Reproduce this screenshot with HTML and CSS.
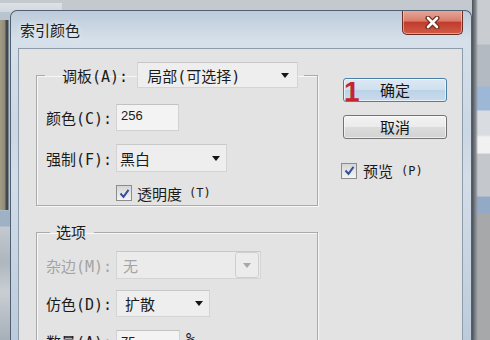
FILE: index.html
```html
<!DOCTYPE html>
<html lang="zh-CN">
<head>
    <meta charset="UTF-8">
    <meta name="viewport" content="width=device-width, initial-scale=1.0">
    <title>索引颜色</title>
    <link rel="stylesheet" href="styles.css">
</head>
<body>
    <div class="desktop">
        <div class="side side-left"></div>

        <!-- 对话框 -->
        <div class="window">
            <div class="titlebar">
                <span class="title">索引颜色</span>
                <button class="close-btn" type="button">
                    <svg width="15" height="13" viewBox="0 0 15 13">
                        <path d="M3 2 L12 11 M12 2 L3 11" stroke="#6b2a22" stroke-width="5" stroke-linecap="round"/>
                        <path d="M3 2 L12 11 M12 2 L3 11" stroke="#ffffff" stroke-width="2.6" stroke-linecap="round"/>
                    </svg>
                </button>
            </div>

            <div class="client">
                <div class="col-main">
                    <!-- 调板 -->
                    <fieldset class="group">
                        <legend class="legend-row">
                            <span>调板(A):</span>
                            <div class="select select-palette"><span>局部(可选择)</span><i class="arrow"></i></div>
                        </legend>
                        <div class="rows rows-palette">
                            <span class="label">颜色(C):</span>
                            <div class="textbox tb-colors">256</div>
                            <span class="label">强制(F):</span>
                            <div class="select select-forced"><span>黑白</span><i class="arrow"></i></div>
                            <span></span>
                            <label class="check">
                                <span class="box"><svg width="13" height="13" viewBox="0 0 13 13"><path d="M2.5 6.5 L5.5 9.8 L10.5 2.8" stroke="#34509a" stroke-width="2" fill="none"/></svg></span>
                                透明度<small>(T)</small>
                            </label>
                        </div>
                    </fieldset>

                    <!-- 选项 -->
                    <fieldset class="group group-options">
                        <legend class="legend-text">选项</legend>
                        <div class="rows rows-options">
                            <span class="label disabled">杂边(M):</span>
                            <div class="select select-matte disabled"><span>无</span><i class="arrow-btn"><i class="arrow"></i></i></div>
                            <span class="label">仿色(D):</span>
                            <div class="select select-dither"><span>扩散</span><i class="arrow"></i></div>
                            <span class="label">数量(A):</span>
                            <div class="amount"><div class="textbox tb-amount">75</div><span>%</span></div>
                        </div>
                    </fieldset>
                </div>

                <div class="col-side">
                    <button class="btn btn-default" type="button"><span class="mark">1</span>确定</button>
                    <button class="btn" type="button">取消</button>
                    <label class="check check-preview">
                        <span class="box"><svg width="13" height="13" viewBox="0 0 13 13"><path d="M2.5 6.5 L5.5 9.8 L10.5 2.8" stroke="#34509a" stroke-width="2" fill="none"/></svg></span>
                        预览<small>(P)</small>
                    </label>
                </div>
            </div>
        </div>

        <div class="side side-right"></div>
    </div>
</body>
</html>
```

FILE: styles.css
```css
body {
    margin: 0;
    width: 490px;
    height: 340px;
    overflow: hidden;
    font-family: "DejaVu Sans Mono", "Noto Sans CJK SC", sans-serif;
    font-size: 15px;
    color: #1b1b1b;
    background:
        linear-gradient(#dde2e7, #cfd6dd) 0 3px / 62px 10px no-repeat,
        #c3c9cf;
}
.desktop {
    display: flex;
    height: 340px;
}
.side {
    flex: none;
}
.side-left {
    width: 10px;
    margin-top: 12px;
    background:
        linear-gradient(to right, #a49c84 0, #8f8a76 5px, #3f4750 6px, #3f4750 8px, #b7c3cf 9px) 0 8px / 10px 190px no-repeat,
        linear-gradient(#b9c4ce 0, #b9c4ce 198px, #9fb1c4 199px, #9fb1c4 214px, #c3c9cf 215px, #aeb6be 250px, #c9ced3 280px, #9ea7b1 340px);
}
.side-right {
    flex: 1;
    background:
        linear-gradient(to right, #4a5058 0, #8b9096 4px, rgba(0, 0, 0, 0) 6px),
        linear-gradient(#c9cdd1 0, #c9cdd1 44px, #b3bac2 45px, #b3bac2 86px, #9db7d6 87px, #9db7d6 110px, #d9dde1 111px, #d9dde1 135px, #f1f1f1 137px, #f1f1f1 153px, #c4c8cc 154px, #c4c8cc 196px, #93aac6 197px, #93aac6 213px, #a6a8aa 214px);
}

/* 窗口框架 */
.window {
    flex: none;
    width: 462px;
    height: 330px;
    margin-top: 10px;
    box-sizing: border-box;
    border: 1px solid #4f6073;
    border-bottom: none;
    border-radius: 7px 7px 0 0;
    padding: 0 8px 0 7px;
    display: flex;
    flex-direction: column;
    overflow: hidden;
    background: linear-gradient(#bccbdb 0, #d6e0ea 30px, #cad7e4 120px, #d3dde8 170px, #bccbdb 330px);
}
.titlebar {
    flex: none;
    height: 37px;
    display: flex;
    justify-content: space-between;
    align-items: flex-start;
}
.title {
    margin: 9px 0 0 2px;
    line-height: 20px;
    font-family: "Noto Sans CJK SC", sans-serif;
    color: #202020;
    text-shadow: 0 0 6px rgba(255, 255, 255, 0.9);
}
.close-btn {
    width: 61px;
    height: 25px;
    margin-top: -1px;
    padding: 0;
    border: 1px solid #6e2c24;
    border-top: none;
    border-radius: 0 0 5px 5px;
    background: linear-gradient(#e8aa9c 0, #d97e6c 45%, #c23b2c 52%, #cf5c47 100%);
    box-shadow: inset 0 0 0 1px rgba(255, 220, 210, 0.5);
    display: flex;
    align-items: center;
    justify-content: center;
}

/* 客户区 */
.client {
    flex: 1;
    min-height: 0;
    display: flex;
    align-items: flex-start;
    padding: 13px 0 0 17px;
    border: 1px solid #8e9bab;
    border-bottom: none;
    background: #e3e3e3;
}
.col-main {
    width: 282px;
}
.group {
    margin: 0;
    padding: 0;
    min-width: 0;
    border: 1px solid #aaaaaa;
    box-shadow: 1px 1px 0 #f7f7f7, inset 1px 1px 0 #f7f7f7;
}
.group-options {
    margin-top: 16px;
}
.legend-row {
    display: flex;
    align-items: center;
    margin-left: 8px;
    padding: 0 6px 0 17px;
}
.legend-text {
    margin-left: 13px;
    padding: 0 8px 0 6px;
    line-height: 20px;
    font-family: "Noto Sans CJK SC", sans-serif;
}
.rows {
    display: grid;
    grid-template-columns: 75px auto;
    column-gap: 4px;
    align-items: center;
    justify-items: start;
}
.rows-palette {
    padding: 16px 0 4px;
    row-gap: 13px;
    grid-template-rows: 27px 28px 16px;
}
.rows-options {
    padding: 9px 0 0;
    grid-template-rows: 28px 27px 27px;
    row-gap: 11px;
}
.rows-options .amount {
    margin-top: 3px;
}
.label {
    justify-self: end;
    white-space: nowrap;
}
.disabled {
    color: #a4a4a4;
}

/* 输入框和下拉框 */
.textbox {
    box-sizing: border-box;
    height: 27px;
    padding: 3px 4px;
    font-family: "Liberation Sans", sans-serif;
    font-size: 13px;
    line-height: 16px;
    background: #f3f3f3;
    border: 1px solid #d2d2d2;
    border-top-color: #c2c2c2;
}
.tb-colors {
    width: 63px;
}
.tb-amount {
    width: 64px;
}
.amount {
    display: flex;
    align-items: flex-start;
    gap: 6px;
}
.select {
    box-sizing: border-box;
    display: flex;
    align-items: center;
    justify-content: space-between;
    padding: 0 6px 0 5px;
    background: #eeeeee;
    border: 1px solid #d4d4d4;
    border-top-color: #c8c8c8;
    white-space: nowrap;
}
.select-palette {
    width: 161px;
    height: 26px;
    margin-left: 9px;
    padding: 0 8px 0 9px;
}
.select-forced {
    width: 111px;
    height: 28px;
    padding-left: 3px;
}
.select-matte {
    width: 145px;
    height: 28px;
    padding: 0 1px 0 6px;
    background: #ebebeb;
}
.select-dither {
    width: 94px;
    height: 27px;
    padding-left: 8px;
}
.arrow {
    display: block;
    width: 0;
    height: 0;
    border-left: 4.5px solid transparent;
    border-right: 4.5px solid transparent;
    border-top: 5px solid #151515;
}
.arrow-btn {
    display: flex;
    align-items: center;
    justify-content: center;
    width: 22px;
    height: 24px;
    border: 1px solid #cfcfcf;
    border-radius: 3px;
    background: #ececec;
}
.arrow-btn .arrow {
    border-top-color: #a8a8a8;
}

/* 复选框 */
.check {
    display: flex;
    align-items: center;
    gap: 5px;
    font-family: "Noto Sans CJK SC", sans-serif;
    white-space: nowrap;
}
.check small {
    font-family: "DejaVu Sans Mono", sans-serif;
    font-size: 12px;
    margin-left: 2px;
}
.box {
    box-sizing: border-box;
    width: 16px;
    height: 16px;
    border: 1px solid #8c8c8c;
    background: linear-gradient(#d6d6d6, #f4f4f4);
    display: flex;
    align-items: center;
    justify-content: center;
}

/* 右侧按钮 */
.col-side {
    margin: 16px 0 0 25px;
    display: flex;
    flex-direction: column;
    align-items: flex-start;
}
.btn {
    position: relative;
    width: 104px;
    height: 24px;
    padding: 0;
    border: 1px solid #737373;
    border-radius: 3px;
    font-family: "Noto Sans CJK SC", sans-serif;
    font-size: 15px;
    line-height: 20px;
    color: #151515;
    background: linear-gradient(#f3f3f3 0, #ebebeb 48%, #dcdcdc 52%, #d2d2d2 100%);
    box-shadow: inset 0 0 0 1px rgba(255, 255, 255, 0.6);
}
.btn + .btn {
    margin-top: 13px;
}
.btn-default {
    border-color: #4a7fa8;
    background: linear-gradient(#dde9f3 0, #cfe0ee 48%, #bcd3e7 52%, #c8dbeb 100%);
}
.mark {
    position: absolute;
    left: 0;
    top: -1px;
    font-family: "Liberation Sans", sans-serif;
    font-weight: bold;
    font-size: 28px;
    line-height: 1;
    color: #c3262e;
}
.check-preview {
    margin: 21px 0 0 -2px;
    gap: 6px;
}
```
